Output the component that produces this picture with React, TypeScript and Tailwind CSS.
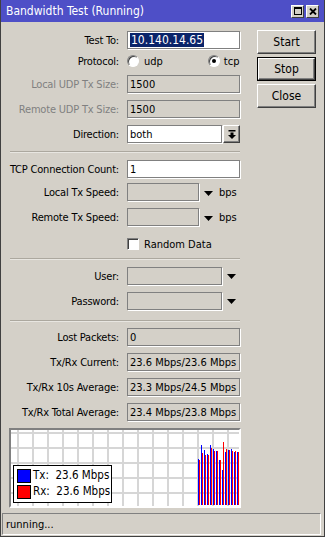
import React from 'react'

const box = 'h-[18px] border border-[#808080] shadow-[1px_1px_0_#ffffff] flex items-center pl-[2px] whitespace-nowrap'

function Row({ label, dim, className, children }: { label: string; dim?: boolean; className?: string; children?: React.ReactNode }) {
  return (
    <div className={`flex items-center h-[18px] ${className ?? ''}`}>
      <div className={`w-[109px] flex justify-end whitespace-nowrap tracking-[-0.2px] ${dim ? 'text-[#808080]' : 'text-black'}`}>{label}</div>
      <div className="ml-[8px] flex items-center">{children}</div>
    </div>
  )
}

function Arrow() {
  return (
    <svg width="9" height="5" viewBox="0 0 9 5" className="block">
      <polygon points="0,0 9,0 4.5,5" fill="#000" />
    </svg>
  )
}

function Radio({ checked }: { checked?: boolean }) {
  return (
    <span className="w-[12px] h-[12px] rounded-full bg-white border border-t-[#808080] border-l-[#808080] border-b-white border-r-white shadow-[inset_1px_1px_0_#404040] flex items-center justify-center">
      {checked && <span className="w-[4px] h-[4px] rounded-full bg-black" />}
    </span>
  )
}

function Sep({ className }: { className?: string }) {
  return (
    <div className={`w-[230px] ${className ?? ''}`}>
      <div className="h-px bg-[#aca89f]" />
      <div className="h-px bg-[#e8e6e1]" />
    </div>
  )
}

function Btn({ label, focused, className }: { label: string; focused?: boolean; className?: string }) {
  return (
    <div className={`w-[59px] h-[24px] ${focused ? 'border border-black' : ''} ${className ?? ''}`}>
      <div className="w-full h-full border border-t-white border-l-white border-r-[#404040] border-b-[#404040] shadow-[inset_-1px_-1px_0_#808080] flex items-center justify-center text-[12px]">
        {label}
      </div>
    </div>
  )
}

const blue = [459, 445, 450, 454, 445, 449, 451, 460, 470, 452, 450, 449, 452, 452]
const red = [460, 453, 455, 455, 448, 451, 451, 460, 442, 449, 450, 451, 451, 452]

function Graph() {
  const vx = Array.from({ length: 15 }, (_, i) => 6 + i * 15)
  const hy = Array.from({ length: 5 }, (_, i) => 2 + i * 15)
  return (
    <div className="relative -ml-px mt-[7px] w-[232px] h-[80px] border-2 border-t-[#808080] border-l-[#808080] border-b-white border-r-white bg-white">
      <svg width="228" height="76" className="block">
        {vx.map((x) => (
          <rect key={'v' + x} x={x} y={0} width={2} height={76} fill="#d6d6d6" />
        ))}
        {hy.map((y) => (
          <rect key={'h' + y} x={0} y={y} width={228} height={2} fill="#d6d6d6" />
        ))}
        {blue.map((t, i) => (
          <rect key={'b' + i} x={187 + i * 3} y={t - 430} width={1} height={505 - t} fill="#0000ff" />
        ))}
        {red.map((t, i) => (
          <rect key={'r' + i} x={188 + i * 3} y={t - 430} width={1} height={505 - t} fill="#ff0000" />
        ))}
      </svg>
      <div className="absolute left-[2px] top-[35px] w-[99px] h-[38px] bg-white border border-black flex flex-col justify-center gap-[2px] pl-[3px]">
        <div className="flex items-center gap-[2px] h-[14px]">
          <span className="w-[14px] h-[14px] bg-[#0000ff] border border-black" />
          <span className="whitespace-pre text-[11.5px]">Tx:  23.6 Mbps</span>
        </div>
        <div className="flex items-center gap-[2px] h-[14px]">
          <span className="w-[14px] h-[14px] bg-[#ff0000] border border-black" />
          <span className="whitespace-pre text-[11.5px]">Rx:  23.6 Mbps</span>
        </div>
      </div>
    </div>
  )
}

export default function App() {
  return (
    <div className="w-[325px] h-[537px] bg-[#d4d0c8] border-x border-b border-[#404040] flex flex-col text-[11px] text-black font-['DejaVu_Sans_Condensed','Liberation_Sans',Arial,sans-serif] leading-none">
      <div className="h-[22px] bg-[#4e4fc7] flex items-center pl-[5px] pr-[5px] shrink-0">
        <span className="text-white text-[12px]">Bandwidth Test (Running)</span>
        <div className="ml-auto flex gap-[2px]">
          <div className="w-[13px] h-[13px] bg-[#d4d0c8] border border-t-white border-l-white border-r-[#404040] border-b-[#404040] flex items-center justify-center">
            <span className="w-[8px] h-[8px] border border-black border-t-2" />
          </div>
          <div className="w-[13px] h-[13px] bg-[#d4d0c8] border border-t-white border-l-white border-r-[#404040] border-b-[#404040] flex items-center justify-center">
            <svg width="8" height="7" viewBox="0 0 8 7">
              <path d="M1 0.5 L7 6.5 M7 0.5 L1 6.5" stroke="#000" strokeWidth="1.8" />
            </svg>
          </div>
        </div>
      </div>

      <div className="flex-1 flex">
        <div className="pl-[9px] flex flex-col w-[240px]">
          <Row label="Test To:" className="mt-[9px]">
            <div className={`${box} w-[113px] bg-white`}>
              <span className="bg-[#0a246a] text-white text-[12px] px-px h-[14px] flex items-center">10.140.14.65</span>
            </div>
          </Row>
          <Row label="Protocol:" className="mt-[3px]">
            <div className="flex items-center w-[113px]">
              <Radio />
              <span className="ml-[5px]">udp</span>
              <span className="ml-[45px]"><Radio checked /></span>
              <span className="ml-[4px]">tcp</span>
            </div>
          </Row>
          <Row label="Local UDP Tx Size:" dim className="mt-[5px]">
            <div className={`${box} w-[113px]`}>1500</div>
          </Row>
          <Row label="Remote UDP Tx Size:" dim className="mt-[7px]">
            <div className={`${box} w-[113px]`}>1500</div>
          </Row>
          <Row label="Direction:" className="mt-[7px]">
            <div className={`${box} w-[95px] bg-white`}>both</div>
            <div className="ml-[1px] w-[17px] h-[18px] border border-t-white border-l-white border-r-[#404040] border-b-[#404040] shadow-[inset_-1px_-1px_0_#808080] flex items-center justify-center">
              <svg width="8" height="9" viewBox="0 0 8 9">
                <rect x="0.5" y="0" width="7" height="1.5" fill="#000" />
                <rect x="2.5" y="2.5" width="3" height="2.5" fill="#000" />
                <polygon points="0,5 8,5 4,9" fill="#000" />
              </svg>
            </div>
          </Row>
          <Sep className="mt-[8px]" />
          <Row label="TCP Connection Count:" className="mt-[7px]">
            <div className={`${box} w-[113px] bg-white`}>1</div>
          </Row>
          <Row label="Local Tx Speed:" className="mt-[5px]">
            <div className={`${box} w-[72px]`} />
            <span className="ml-[5px] mt-[2px]"><Arrow /></span>
            <span className="ml-[6px]">bps</span>
          </Row>
          <Row label="Remote Tx Speed:" className="mt-[7px]">
            <div className={`${box} w-[72px]`} />
            <span className="ml-[5px] mt-[2px]"><Arrow /></span>
            <span className="ml-[6px]">bps</span>
          </Row>
          <Row label="" className="mt-[9px]">
            <span className="w-[12px] h-[12px] bg-white border border-t-[#808080] border-l-[#808080] border-b-white border-r-white shadow-[inset_1px_1px_0_#404040]" />
            <span className="ml-[5px]">Random Data</span>
          </Row>
          <Sep className="mt-[5px]" />
          <Row label="User:" className="mt-[7px]">
            <div className={`${box} w-[95px]`} />
            <span className="ml-[5px]"><Arrow /></span>
          </Row>
          <Row label="Password:" className="mt-[7px]">
            <div className={`${box} w-[95px]`} />
            <span className="ml-[5px]"><Arrow /></span>
          </Row>
          <Sep className="mt-[10px]" />
          <Row label="Lost Packets:" className="mt-[6px]">
            <div className={`${box} w-[113px]`}>0</div>
          </Row>
          <Row label="Tx/Rx Current:" className="mt-[7px]">
            <div className={`${box} w-[113px]`}>23.6 Mbps/23.6 Mbps</div>
          </Row>
          <Row label="Tx/Rx 10s Average:" className="mt-[7px]">
            <div className={`${box} w-[113px]`}>23.3 Mbps/24.5 Mbps</div>
          </Row>
          <Row label="Tx/Rx Total Average:" className="mt-[7px]">
            <div className={`${box} w-[113px]`}>23.4 Mbps/23.8 Mbps</div>
          </Row>
          <Graph />
        </div>
        <div className="ml-[16px] pt-[8px] flex flex-col gap-[3px]">
          <Btn label="Start" />
          <Btn label="Stop" focused />
          <Btn label="Close" />
        </div>
      </div>

      <div className="h-[22px] w-[319px] ml-px mb-px shrink-0 border border-t-[#808080] border-l-[#808080] border-b-white border-r-white flex items-center pl-[3px]">
        running...
      </div>
    </div>
  )
}
